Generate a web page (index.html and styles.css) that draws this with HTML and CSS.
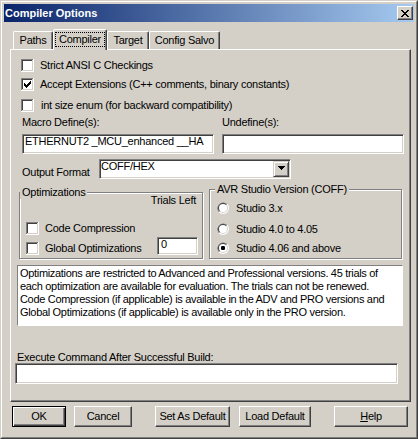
FILE: index.html
```html
<!DOCTYPE html>
<html>
<head>
<meta charset="utf-8">
<title>Compiler Options</title>
<link rel="stylesheet" href="styles.css">
</head>
<body>
<div class="win">
  <div class="frame">
    <div class="titlebar">
      <span class="title">Compiler Options</span>
      <span class="close">
        <svg width="8" height="7" viewBox="0 0 8 7" shape-rendering="crispEdges"><path fill="#000" d="M0 0h2v1h-2z M6 0h2v1h-2z M1 1h2v1h-2z M5 1h2v1h-2z M2 2h4v1h-4z M3 3h2v1h-2z M2 4h4v1h-4z M1 5h2v1h-2z M5 5h2v1h-2z M0 6h2v1h-2z M6 6h2v1h-2z"/></svg>
      </span>
    </div>
    <div class="client">
      <div class="tabs">
        <div class="tab t-paths">Paths</div>
        <div class="tab active t-compiler"><span class="focus">Compiler</span></div>
        <div class="tab t-target">Target</div>
        <div class="tab t-config">Config Salvo</div>
      </div>
      <div class="panel">
        <div class="chk r1">
          <svg class="cb" width="13" height="13" viewBox="0 0 13 13" shape-rendering="crispEdges"><rect width="13" height="13" fill="#fff"/><rect width="12" height="1" fill="#808080"/><rect width="1" height="12" fill="#808080"/><rect x="1" y="1" width="10" height="1" fill="#404040"/><rect x="1" y="1" width="1" height="10" fill="#404040"/><rect x="1" y="11" width="11" height="1" fill="#D4D0C8"/><rect x="11" y="1" width="1" height="11" fill="#D4D0C8"/></svg>
          <span>Strict ANSI C Checkings</span>
        </div>
        <div class="chk r2">
          <svg class="cb" width="13" height="13" viewBox="0 0 13 13" shape-rendering="crispEdges"><rect width="13" height="13" fill="#fff"/><rect width="12" height="1" fill="#808080"/><rect width="1" height="12" fill="#808080"/><rect x="1" y="1" width="10" height="1" fill="#404040"/><rect x="1" y="1" width="1" height="10" fill="#404040"/><rect x="1" y="11" width="11" height="1" fill="#D4D0C8"/><rect x="11" y="1" width="1" height="11" fill="#D4D0C8"/><path transform="translate(3 3)" fill="#000" d="M0 2H1V3H2V4H3V3H4V2H5V1H6V0H7V3H6V4H5V5H4V6H3V7H2V6H1V5H0Z"/></svg>
          <span>Accept Extensions (C++ comments, binary constants)</span>
        </div>
        <div class="chk r3">
          <svg class="cb" width="13" height="13" viewBox="0 0 13 13" shape-rendering="crispEdges"><rect width="13" height="13" fill="#fff"/><rect width="12" height="1" fill="#808080"/><rect width="1" height="12" fill="#808080"/><rect x="1" y="1" width="10" height="1" fill="#404040"/><rect x="1" y="1" width="1" height="10" fill="#404040"/><rect x="1" y="11" width="11" height="1" fill="#D4D0C8"/><rect x="11" y="1" width="1" height="11" fill="#D4D0C8"/></svg>
          <span class="sp1">int size enum (for backward compatibility)</span>
        </div>

        <div class="pair labels">
          <div class="col1">Macro Define(s):</div>
          <div class="col2">Undefine(s):</div>
        </div>
        <div class="pair fields">
          <div class="field col1 f20">ETHERNUT2 _MCU_enhanced __HA</div>
          <div class="field col2 f20"></div>
        </div>

        <div class="outrow">
          <div class="outlabel">Output Format</div>
          <div class="combo">
            <div class="combo-text">COFF/HEX</div>
            <div class="ddbtn">
              <svg width="7" height="4" viewBox="0 0 7 4" shape-rendering="crispEdges"><path fill="#000" d="M0 0h7v1h-1v1h-1v1h-1v1h-1v-1h-1v-1h-1v-1h-1z"/></svg>
            </div>
          </div>
        </div>

        <div class="groups">
          <div class="group g-opt">
            <div class="glabel">Optimizations</div>
            <div class="trials">Trials Left</div>
            <div class="chk gc1">
              <svg class="cb" width="13" height="13" viewBox="0 0 13 13" shape-rendering="crispEdges"><rect width="13" height="13" fill="#fff"/><rect width="12" height="1" fill="#808080"/><rect width="1" height="12" fill="#808080"/><rect x="1" y="1" width="10" height="1" fill="#404040"/><rect x="1" y="1" width="1" height="10" fill="#404040"/><rect x="1" y="11" width="11" height="1" fill="#D4D0C8"/><rect x="11" y="1" width="1" height="11" fill="#D4D0C8"/></svg>
              <span>Code Compression</span>
            </div>
            <div class="globrow">
              <div class="chk gc2">
                <svg class="cb" width="13" height="13" viewBox="0 0 13 13" shape-rendering="crispEdges"><rect width="13" height="13" fill="#fff"/><rect width="12" height="1" fill="#808080"/><rect width="1" height="12" fill="#808080"/><rect x="1" y="1" width="10" height="1" fill="#404040"/><rect x="1" y="1" width="1" height="10" fill="#404040"/><rect x="1" y="11" width="11" height="1" fill="#D4D0C8"/><rect x="11" y="1" width="1" height="11" fill="#D4D0C8"/></svg>
                <span>Global Optimizations</span>
              </div>
              <div class="field trialbox">0</div>
            </div>
          </div>
          <div class="group g-avr">
            <div class="glabel avrlabel">AVR Studio Version (COFF)</div>
            <div class="radio ra1">
              <svg width="12" height="12" viewBox="0 0 12 12"><circle cx="6" cy="6" r="6" fill="#fff"/><path d="M1.76 10.24A6 6 0 0 1 10.24 1.76Z" fill="#808080"/><circle cx="6" cy="6" r="5" fill="#D4D0C8"/><path d="M2.46 9.54A5 5 0 0 1 9.54 2.46Z" fill="#404040"/><circle cx="6" cy="6" r="4" fill="#fff"/></svg>
              <span>Studio 3.x</span>
            </div>
            <div class="radio ra2">
              <svg width="12" height="12" viewBox="0 0 12 12"><circle cx="6" cy="6" r="6" fill="#fff"/><path d="M1.76 10.24A6 6 0 0 1 10.24 1.76Z" fill="#808080"/><circle cx="6" cy="6" r="5" fill="#D4D0C8"/><path d="M2.46 9.54A5 5 0 0 1 9.54 2.46Z" fill="#404040"/><circle cx="6" cy="6" r="4" fill="#fff"/></svg>
              <span>Studio 4.0 to 4.05</span>
            </div>
            <div class="radio ra3">
              <svg width="12" height="12" viewBox="0 0 12 12"><circle cx="6" cy="6" r="6" fill="#fff"/><path d="M1.76 10.24A6 6 0 0 1 10.24 1.76Z" fill="#808080"/><circle cx="6" cy="6" r="5" fill="#D4D0C8"/><path d="M2.46 9.54A5 5 0 0 1 9.54 2.46Z" fill="#404040"/><circle cx="6" cy="6" r="4" fill="#fff"/><rect x="4" y="4" width="4" height="4" rx="1.2" fill="#000"/></svg>
              <span>Studio 4.06 and above</span>
            </div>
          </div>
        </div>

        <div class="info">Optimizations are restricted to Advanced and Professional versions. 45 trials of<br>each optimization are available for evaluation. The trials can not be renewed.<br>Code Compression (if applicable) is available in the ADV and PRO versions and<br>Global Optimizations (if applicable) is available only in the PRO version.</div>

        <div class="execlabel">Execute Command After Successful Build:</div>
        <div class="field execfield"></div>
      </div>

      <div class="buttons">
        <div class="btn default b-ok">OK</div>
        <div class="btn b-cancel">Cancel</div>
        <div class="btn b-set">Set As Default</div>
        <div class="btn b-load">Load Default</div>
        <div class="btn b-help"><span><u>H</u>elp</span></div>
      </div>
    </div>
  </div>
</div>
</body>
</html>
```
FILE: styles.css
```css
* { box-sizing: border-box; }
html, body { margin: 0; padding: 0; }
body {
  width: 418px;
  height: 439px;
  overflow: hidden;
  background: #D4D0C8;
  font-family: "Liberation Sans", Arial, sans-serif;
  font-size: 11px;
  line-height: 13px;
  letter-spacing: -0.25px;
  color: #000;
}
svg { display: block; flex: none; }

.win {
  width: 418px;
  height: 439px;
  border: 1px solid;
  border-color: #D4D0C8 #404040 #404040 #D4D0C8;
  background: #D4D0C8;
}
.frame {
  height: 100%;
  border: 1px solid;
  border-color: #fff #808080 #808080 #fff;
  padding: 2px;
}

.titlebar {
  height: 18px;
  display: flex;
  align-items: center;
  background: linear-gradient(to right, #0A246A, #A6CAF0);
  padding: 0 1px 0 1px;
}
.title {
  flex: 1;
  color: #fff;
  font-weight: bold;
  letter-spacing: 0;
}
.close {
  width: 16px;
  height: 14px;
  background: #D4D0C8;
  border: 1px solid;
  border-color: #fff #404040 #404040 #fff;
  box-shadow: inset -1px -1px #808080;
  display: flex;
  align-items: center;
  justify-content: center;
  padding-right: 1px;
}

.client { padding-left: 6px; }

.tabs {
  margin-top: 7px;
  height: 20px;
  display: flex;
  align-items: flex-end;
  padding-left: 3px;
}
.tab {
  height: 18px;
  border: 1px solid;
  border-bottom: none;
  border-color: #fff #404040 transparent #fff;
  box-shadow: inset -1px 0 #808080;
  border-radius: 2px 2px 0 0;
  text-align: center;
  padding-top: 2px;
  white-space: nowrap;
}
.tab.active {
  height: 21px;
  margin-bottom: -1px;
  position: relative;
  z-index: 1;
  background: #D4D0C8;
  padding: 2px 1px 0 1px;
}
.focus {
  display: block;
  border: 1px dotted #000;
}
.t-paths { width: 40px; }
.t-compiler { width: 54px; }
.t-target { width: 42px; }
.t-config { width: 71px; }

.panel {
  width: 401px;
  height: 353px;
  border: 1px solid;
  border-color: #fff #404040 #404040 #fff;
  box-shadow: inset -1px -1px #808080;
}

.chk {
  display: flex;
  align-items: center;
  height: 13px;
  gap: 6px;
  white-space: nowrap;
}
.r1, .r2, .r3 { margin-left: 10px; }
.r1 { margin-top: 9px; }
.r2 { margin-top: 6px; }
.r3 { margin-top: 8px; }
.sp1 { padding-left: 1px; }

.pair {
  display: flex;
  gap: 8px;
  margin-left: 11px;
}
.col1 { width: 192px; }
.col2 { width: 182px; }
.labels { margin-top: 4px; height: 13px; }
.fields { margin-top: 5px; }

.field {
  border: 1px solid;
  border-color: #808080 #fff #fff #808080;
  box-shadow: inset 1px 1px #404040, inset -1px -1px #D4D0C8;
  background: #fff;
  padding: 0 2px;
  overflow: hidden;
  white-space: nowrap;
}
.f20 { height: 20px; }

.outrow {
  display: flex;
  margin-top: 5px;
  margin-left: 11px;
  height: 20px;
}
.outlabel {
  width: 77px;
  padding-top: 7px;
  white-space: nowrap;
}
.combo {
  width: 192px;
  height: 20px;
  display: flex;
  border: 1px solid;
  border-color: #808080 #fff #fff #808080;
  box-shadow: inset 1px 1px #404040, inset -1px -1px #D4D0C8;
  background: #fff;
}
.combo-text {
  flex: 1;
  line-height: 12px;
  padding-left: 1px;
}
.ddbtn {
  width: 16px;
  height: 16px;
  margin: 1px;
  background: #D4D0C8;
  border: 1px solid;
  border-color: #D4D0C8 #404040 #404040 #D4D0C8;
  box-shadow: inset 1px 1px #fff, inset -1px -1px #808080;
  display: flex;
  align-items: center;
  justify-content: center;
}
.ddbtn svg { margin-top: -2px; }

.groups {
  display: flex;
  align-items: flex-end;
  gap: 6px;
  margin-top: 10px;
  margin-left: 8px;
  height: 70px;
}
.group {
  border: 1px solid #808080;
  box-shadow: 1px 1px 0 #fff, inset 1px 1px 0 #fff;
}
.g-opt { width: 184px; height: 67px; }
.g-avr { width: 193px; height: 70px; }
.glabel {
  display: block;
  width: fit-content;
  background: #D4D0C8;
  padding: 0 2px;
  margin-top: -7px;
  height: 13px;
  white-space: nowrap;
}
.avrlabel { margin-left: 5px; }
.trials {
  margin-top: -5px;
  text-align: right;
  padding-right: 6px;
}
.gc1 { margin-top: 15px; margin-left: 6px; }
.globrow {
  display: flex;
  align-items: flex-end;
  margin-top: 2px;
  height: 18px;
}
.gc2 { margin-left: 6px; }
.trialbox {
  width: 41px;
  height: 18px;
  margin-left: auto;
  margin-right: 4px;
  padding-left: 3px;
}

.radio {
  display: flex;
  align-items: center;
  gap: 7px;
  margin-left: 7px;
  height: 12px;
  white-space: nowrap;
}
.ra1 { margin-top: 6px; }
.ra2 { margin-top: 9px; }
.ra3 { margin-top: 7px; }

.info {
  margin-top: 6px;
  margin-left: 6px;
  width: 386px;
  height: 61px;
  border: 1px solid;
  border-color: #808080 #fff #fff #808080;
  background: #fff;
  padding: 1px 0 0 2px;
  white-space: nowrap;
  overflow: hidden;
  letter-spacing: -0.32px;
}

.execlabel {
  margin-top: 25px;
  margin-left: 6px;
  line-height: 12px;
  height: 12px;
}
.execfield {
  margin-left: 4px;
  width: 383px;
  height: 21px;
}

.buttons {
  display: flex;
  margin-top: 4px;
  margin-left: 2px;
  height: 21px;
}
.btn {
  height: 21px;
  border: 1px solid;
  border-color: #fff #404040 #404040 #fff;
  box-shadow: inset -1px -1px #808080;
  display: flex;
  align-items: center;
  justify-content: center;
  white-space: nowrap;
}
.btn.default {
  border-color: #000;
  box-shadow: inset 1px 1px #fff, inset -1px -1px #404040, inset -2px -2px #808080;
}
.b-ok { width: 54px; }
.b-cancel { width: 58px; margin-left: 8px; }
.b-set { width: 75px; margin-left: 23px; }
.b-load { width: 72px; margin-left: 9px; }
.b-help { width: 74px; margin-left: 23px; }
```
